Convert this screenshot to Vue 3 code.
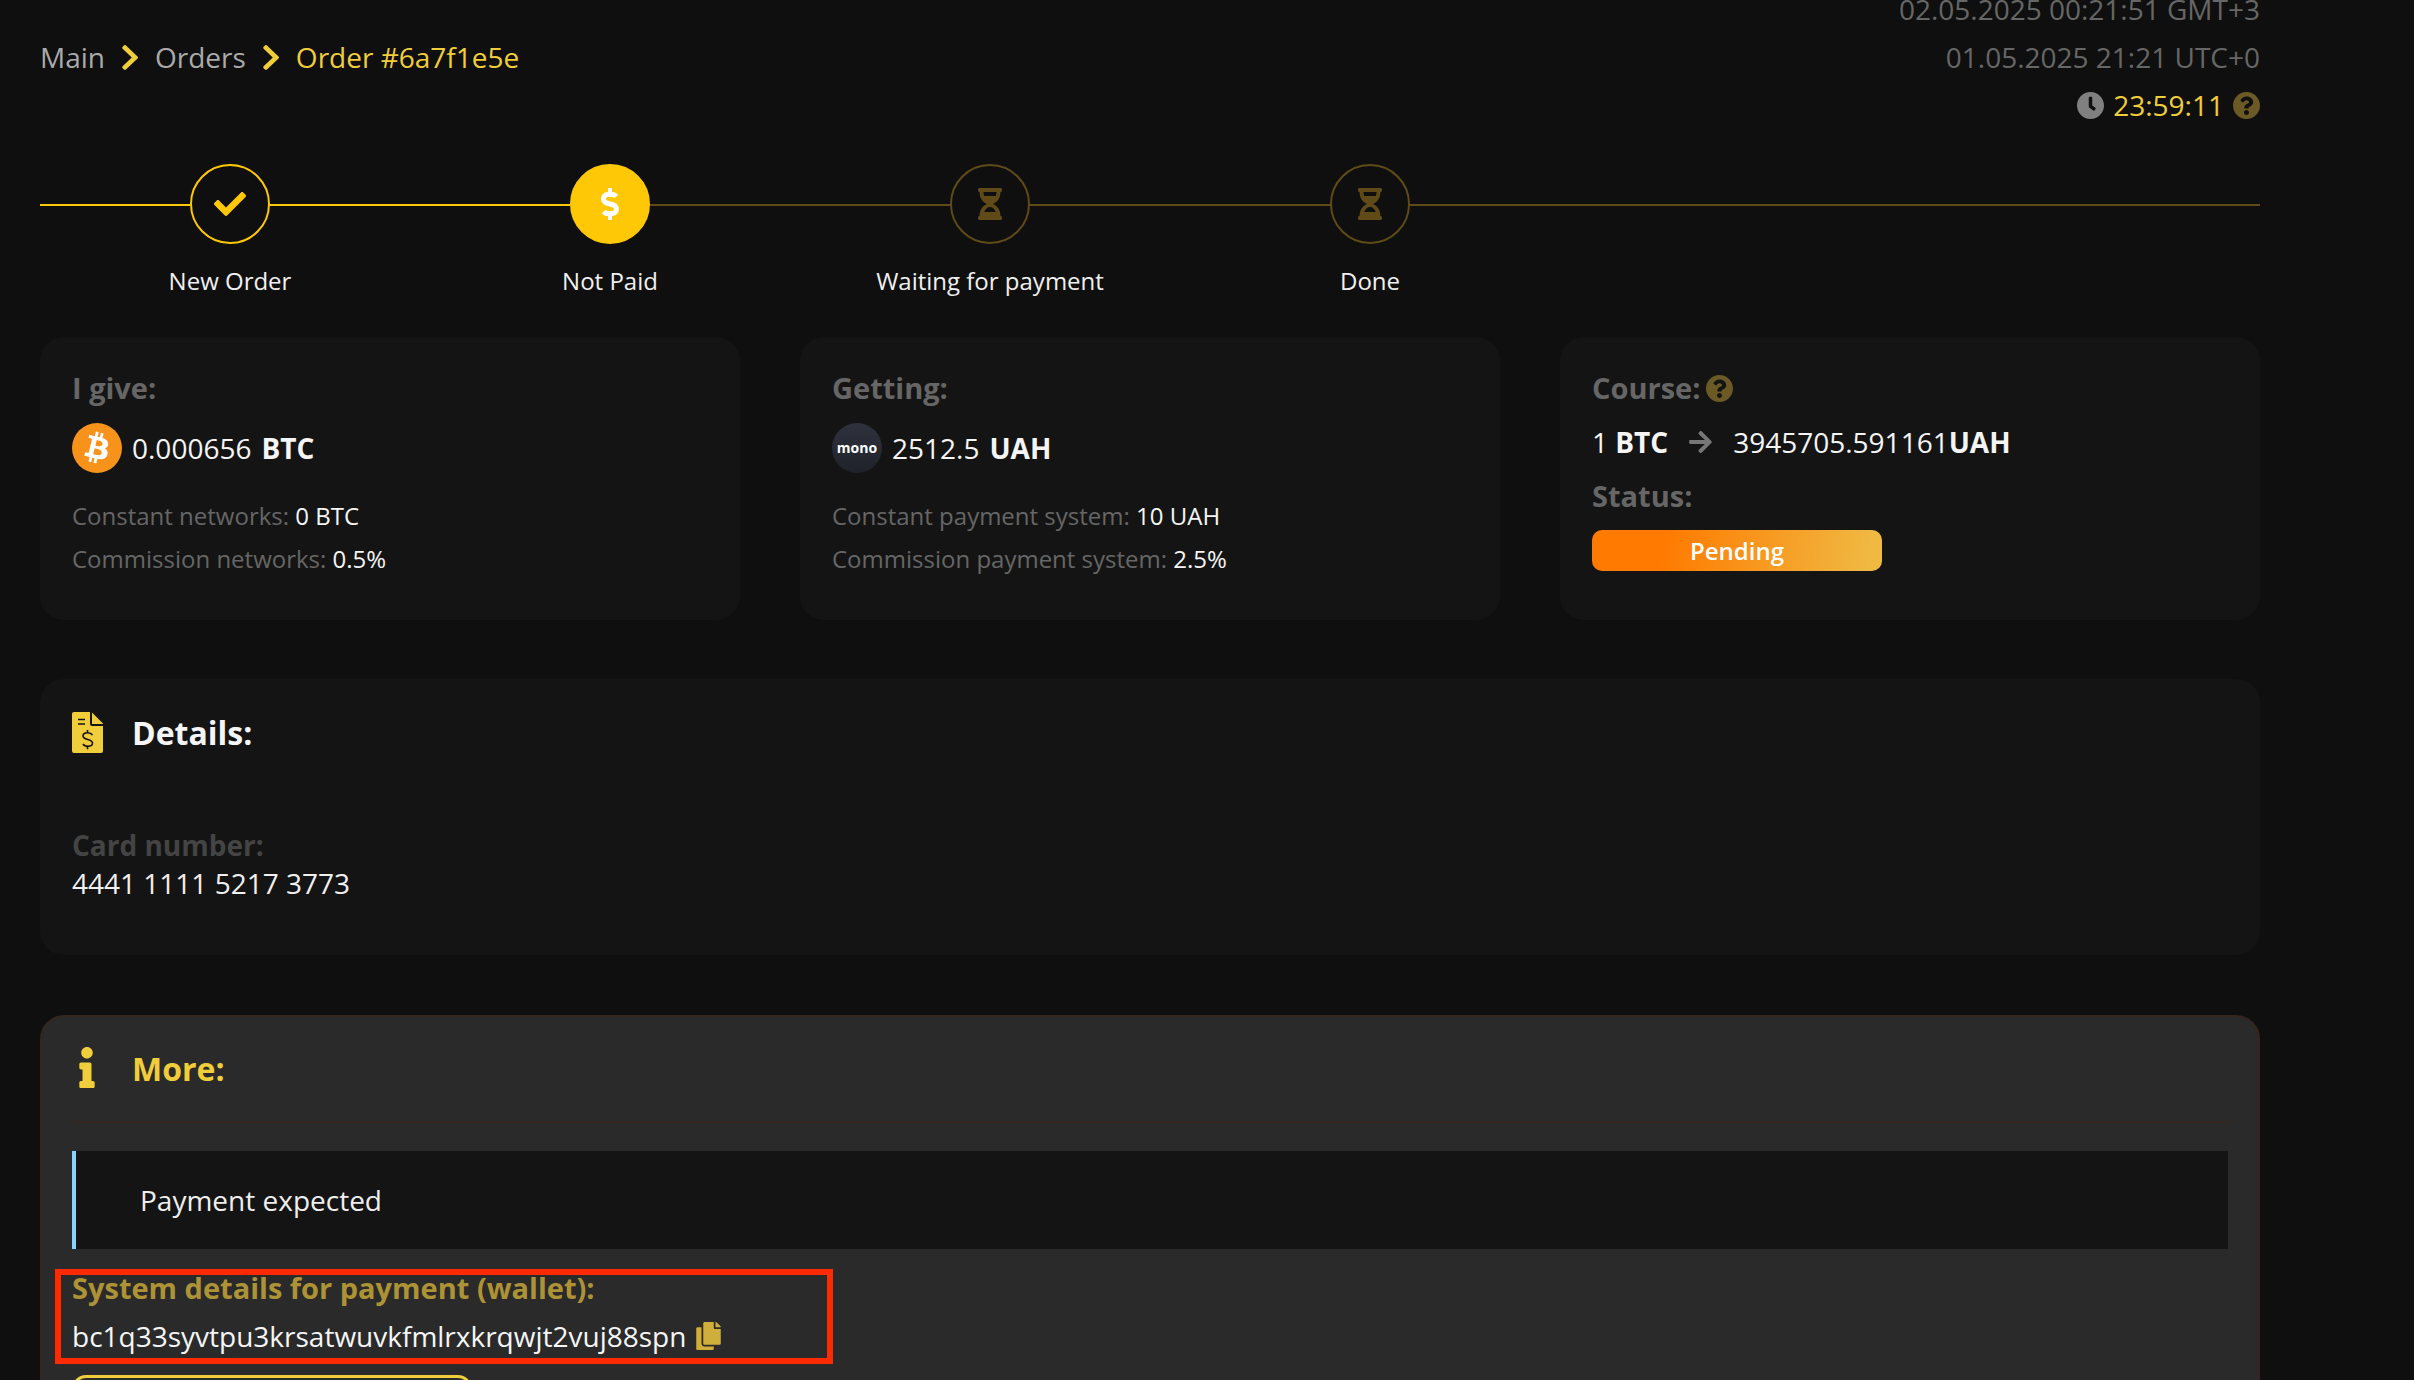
<script setup>
const icons = {
  check: { box: '0 0 512 512', d: 'M173.898 439.404l-166.4-166.4c-9.997-9.997-9.997-26.206 0-36.204l36.203-36.204c9.997-9.998 26.207-9.998 36.204 0L192 312.69 432.095 72.596c9.997-9.997 26.207-9.997 36.204 0l36.203 36.204c9.997 9.997 9.997 26.206 0 36.204l-294.4 294.401c-9.998 9.997-26.207 9.997-36.204-.001z' },
  dollar: { box: '0 0 288 512', d: 'M209.2 233.4l-108-31.6C88.7 198.2 80 186.5 80 173.5c0-16.3 13.2-29.5 29.5-29.5h66.3c12.2 0 24.2 3.7 34.2 10.5 6.1 4.1 14.3 3.1 19.5-2l34.8-34c7.1-6.9 6.1-18.4-1.8-24.5C238 74.8 207.4 64.1 176 64V16c0-8.8-7.2-16-16-16h-32c-8.8 0-16 7.2-16 16v48h-2.5C45.8 64-5.4 118.7.5 183.6c4.2 46.1 39.4 83.6 83.8 96.6l102.5 30c12.5 3.7 21.2 15.3 21.2 28.3 0 16.3-13.2 29.5-29.5 29.5h-66.3C100 368 88 364.3 78 357.5c-6.1-4.1-14.3-3.1-19.5 2l-34.8 34c-7.1 6.9-6.1 18.4 1.8 24.5 24.5 19.2 55.1 29.9 86.5 30v48c0 8.8 7.2 16 16 16h32c8.8 0 16-7.2 16-16v-48.2c46.6-.9 90.3-28.6 105.7-72.7 21.5-61.6-14.6-124.8-72.5-141.7z' },
  hourglass: { box: '0 0 384 512', d: 'M360 0H24C10.745 0 0 10.745 0 24v16c0 13.255 10.745 24 24 24 0 90.965 51.016 167.734 120.842 192C75.016 280.266 24 357.035 24 448c-13.255 0-24 10.745-24 24v16c0 13.255 10.745 24 24 24h336c13.255 0 24-10.745 24-24v-16c0-13.255-10.745-24-24-24 0-90.965-51.016-167.734-120.842-192C308.984 231.734 360 154.965 360 64c13.255 0 24-10.745 24-24V24c0-13.255-10.745-24-24-24zm-75.078 384H99.08c17.059-46.797 52.096-80 92.92-80 40.821 0 75.862 33.196 92.922 80zm.019-256H99.078C91.988 108.548 88 86.748 88 64h208c0 22.805-3.987 44.587-11.059 64z' },
}

const steps = [
  { label: 'New Order', icon: 'check', state: 'done' },
  { label: 'Not Paid', icon: 'dollar', state: 'active' },
  { label: 'Waiting for payment', icon: 'hourglass', state: 'todo' },
  { label: 'Done', icon: 'hourglass', state: 'todo' },
]

const helpPath = 'M504 256c0 136.997-111.043 248-248 248S8 392.997 8 256C8 119.083 119.043 8 256 8s248 111.083 248 248zM262.655 90c-54.497 0-89.255 22.957-116.549 63.758-3.536 5.286-2.353 12.415 2.715 16.258l34.699 26.31c5.205 3.947 12.621 3.008 16.665-2.122 17.864-22.658 30.113-35.797 57.303-35.797 20.429 0 45.698 13.148 45.698 32.958 0 14.976-12.363 22.667-32.534 33.976C247.128 238.528 216 254.941 216 296v4c0 6.627 5.373 12 12 12h56c6.627 0 12-5.373 12-12v-1.333c0-28.462 83.186-29.647 83.186-106.667 0-58.002-60.165-102-116.531-102zM256 338c-25.365 0-46 20.635-46 46 0 25.364 20.635 46 46 46s46-20.636 46-46c0-25.365-20.635-46-46-46z'
const chevronPath = 'M285.476 272.971L91.132 467.314c-9.373 9.373-24.569 9.373-33.941 0l-22.667-22.667c-9.357-9.357-9.375-24.522-.04-33.901L188.505 256 34.484 101.255c-9.335-9.379-9.317-24.544.04-33.901l22.667-22.667c9.373-9.373 24.569-9.373 33.941 0L285.475 239.03c9.373 9.372 9.373 24.568.001 33.941z'
</script>

<template>
  <div class="page">
    <header class="top">
      <nav class="crumbs">
        <span>Main</span>
        <svg class="chevron" viewBox="24 37 269 438" preserveAspectRatio="none"><path :d="chevronPath" /></svg>
        <span>Orders</span>
        <svg class="chevron" viewBox="24 37 269 438" preserveAspectRatio="none"><path :d="chevronPath" /></svg>
        <span class="current">Order #6a7f1e5e</span>
      </nav>
      <div class="times">
        <div>02.05.2025 00:21:51 GMT+3</div>
        <div>01.05.2025 21:21 UTC+0</div>
        <div class="timer">
          <svg class="clock" viewBox="8 8 496 496"><path d="M256,8C119,8,8,119,8,256S119,504,256,504,504,393,504,256,393,8,256,8Zm92.49,313h0l-20,25a16,16,0,0,1-22.49,2.5h0l-67-49.72a40,40,0,0,1-15-31.23V112a16,16,0,0,1,16-16h32a16,16,0,0,1,16,16V256l58,42.5A16,16,0,0,1,348.49,321Z" /></svg>
          <span class="countdown">23:59:11</span>
          <svg class="help" viewBox="8 8 496 496"><path :d="helpPath" /></svg>
        </div>
      </div>
    </header>

    <section class="steps">
      <div class="track"></div>
      <div v-for="step in steps" :key="step.label" class="step" :class="step.state">
        <div class="circle">
          <svg :class="'ico-' + step.icon" :viewBox="icons[step.icon].box"><path :d="icons[step.icon].d" /></svg>
        </div>
        <div class="step-label">{{ step.label }}</div>
      </div>
    </section>

    <section class="cards">
      <div class="card">
        <div class="card-title">I give:</div>
        <div class="amount">
          <svg class="coin" viewBox="0 0 64 64">
            <circle cx="32" cy="32" r="32" fill="#f7931a" />
            <path fill="#fff" d="M46.1 27.4c.6-4.3-2.6-6.6-7.1-8.1l1.5-5.8-3.5-.9-1.4 5.7c-.9-.2-1.9-.5-2.8-.7l1.4-5.7-3.6-.9-1.4 5.8c-.8-.2-1.5-.3-2.2-.5l-4.9-1.2-.9 3.8s2.6.6 2.6.6c1.4.4 1.7 1.3 1.6 2l-1.6 6.6c.1 0 .2.1.4.1l-.4-.1-2.3 9.2c-.2.4-.6 1.1-1.6.8 0 .1-2.6-.6-2.6-.6l-1.8 4.1 4.6 1.2c.9.2 1.7.4 2.5.6l-1.5 5.9 3.5.9 1.5-5.8c1 .3 1.9.5 2.8.7l-1.4 5.8 3.6.9 1.5-5.9c6 1.1 10.6.7 12.5-4.8 1.5-4.4-.1-7-3.3-8.6 2.3-.5 4.1-2.1 4.6-5.3zm-8.1 11.3c-1.1 4.4-8.5 2-10.9 1.4l1.9-7.8c2.4.6 10.1 1.8 9 6.4zm1.1-11.4c-1 4-7.2 2-9.2 1.5l1.8-7.1c2 .5 8.5 1.4 7.4 5.6z" />
          </svg>
          <span>0.000656</span>
          <b>BTC</b>
        </div>
        <div class="meta">Constant networks: <span>0 BTC</span></div>
        <div class="meta">Commission networks: <span>0.5%</span></div>
      </div>

      <div class="card">
        <div class="card-title">Getting:</div>
        <div class="amount">
          <div class="mono">mono</div>
          <span>2512.5</span>
          <b>UAH</b>
        </div>
        <div class="meta">Constant payment system: <span>10 UAH</span></div>
        <div class="meta">Commission payment system: <span>2.5%</span></div>
      </div>

      <div class="card">
        <div class="card-title course">
          Course:
          <svg class="help" viewBox="8 8 496 496"><path :d="helpPath" /></svg>
        </div>
        <div class="rate">
          <span>1 <b>BTC</b></span>
          <svg class="arrow" viewBox="0 0 448 512"><path d="M190.5 66.9l22.2-22.2c9.4-9.4 24.6-9.4 33.9 0L441 239c9.4 9.4 9.4 24.6 0 33.9L246.6 467.3c-9.4 9.4-24.6 9.4-33.9 0l-22.2-22.2c-9.5-9.5-9.3-25 .4-34.3L311.4 296H24c-13.3 0-24-10.7-24-24v-32c0-13.3 10.7-24 24-24h287.4L190.9 101.2c-9.8-9.3-10-24.8-.4-34.3z" /></svg>
          <span>3945705.591161<b>UAH</b></span>
        </div>
        <div class="card-title status">Status:</div>
        <div class="pending">Pending</div>
      </div>
    </section>

    <section class="panel details">
      <div class="panel-head">
        <svg class="doc" viewBox="0 0 31 41">
          <path fill="#f0cd3b" d="M2 0h16v12a2 2 0 0 0 2 2h11v25a2 2 0 0 1-2 2H2a2 2 0 0 1-2-2V2a2 2 0 0 1 2-2z" />
          <path fill="#f0cd3b" d="M20 .5 31 11.5V12H20z" />
          <path fill="none" stroke="#141414" stroke-width="1.6" d="M6 7.500h7M6 12h7M20.500 23c-1-1.500-2.700-2.200-5-2.200-2.500 0-4.500 1.300-4.500 3.300 0 4.400 9.500 2.400 9.500 6.900 0 2-2 3.300-4.500 3.300-2.300 0-4-.7-5-2.300M15.500 18v3M15.500 34.300v3" />
        </svg>
        <h2>Details:</h2>
      </div>
      <div class="field-label">Card number:</div>
      <div class="field-value">4441 1111 5217 3773</div>
    </section>

    <section class="panel more">
      <div class="panel-head">
        <svg class="info" viewBox="0 0 192 512"><path d="M20 424.229h20V279.771H20c-11.046 0-20-8.954-20-20V212c0-11.046 8.954-20 20-20h112c11.046 0 20 8.954 20 20v212.229h20c11.046 0 20 8.954 20 20V492c0 11.046-8.954 20-20 20H20c-11.046 0-20-8.954-20-20v-47.771c0-11.046 8.954-20 20-20zM96 0C56.235 0 24 32.235 24 72s32.235 72 72 72 72-32.235 72-72S135.764 0 96 0z" /></svg>
        <h2>More:</h2>
      </div>
      <div class="notice">Payment expected</div>
      <div class="wallet">
        <div class="highlight"></div>
        <div class="wallet-label">System details for payment (wallet):</div>
        <div class="wallet-value">
          <span>bc1q33syvtpu3krsatwuvkfmlrxkrqwjt2vuj88spn</span>
          <svg class="copy" viewBox="0 0 448 512"><path d="M320 448v40c0 13.255-10.745 24-24 24H24c-13.255 0-24-10.745-24-24V120c0-13.255 10.745-24 24-24h72v296c0 30.879 25.121 56 56 56h168zm0-344V0H152c-13.255 0-24 10.745-24 24v368c0 13.255 10.745 24 24 24h272c13.255 0 24-10.745 24-24V128H344c-13.2 0-24-10.8-24-24zm120.971-31.029L375.029 7.029A24 24 0 0 0 358.059 0H352v96h96v-6.059a24 24 0 0 0-7.029-16.97z" /></svg>
        </div>
      </div>
      <div class="outline-btn"></div>
    </section>
  </div>
</template>

<style>
html, body {
  margin: 0;
  height: 100%;
  overflow: hidden;
  background: #0f0f0f;
}
</style>

<style scoped>
.page {
  box-sizing: border-box;
  width: 2300px;
  height: 1380px;
  padding: 0 40px;
  overflow: hidden;
  font-family: "Open Sans", "Noto Sans", sans-serif;
  font-size: 28px;
  color: #fff;
  background: #0f0f0f;
}

.top {
  display: flex;
  justify-content: space-between;
  align-items: flex-start;
  height: 130px;
  line-height: 48px;
}

.crumbs {
  display: flex;
  align-items: center;
  gap: 17px;
  margin-top: 33px;
  color: #aaa;
}
.crumbs .current { color: #f0cd3b; }
.chevron { width: 16px; height: 25px; fill: #f0cd3b; }

.times {
  margin-top: -15px;
  text-align: right;
  color: #666;
}
.timer {
  display: flex;
  justify-content: flex-end;
  align-items: center;
  gap: 9px;
}
.countdown { color: #f0cd3b; }
.clock { width: 27px; height: 27px; fill: #808080; }
.help { width: 27px; height: 27px; fill: #6b5a26; }

.steps {
  position: relative;
  display: flex;
  margin-top: 34px;
}
.track {
  position: absolute;
  top: 40px;
  left: 0;
  right: 0;
  height: 2px;
  background: linear-gradient(to right, #ffc807 530px, #5f4a18 530px);
}
.step {
  position: relative;
  width: 380px;
  display: flex;
  flex-direction: column;
  align-items: center;
}
.circle {
  box-sizing: border-box;
  width: 80px;
  height: 80px;
  border-radius: 50%;
  border: 2px solid #5f4a18;
  background: #0f0f0f;
  display: flex;
  align-items: center;
  justify-content: center;
  fill: #5f4a18;
}
.step.done .circle { border-color: #ffc807; fill: #ffc807; }
.step.active .circle { border-color: #ffc807; background: #ffc807; fill: #fff; }
.ico-check { width: 32px; height: 32px; }
.ico-dollar { width: 20px; height: 32px; }
.ico-hourglass { width: 24px; height: 32px; }
.step-label {
  margin-top: 20px;
  font-size: 24px;
  line-height: 34px;
  color: #f0f0f0;
}

.cards {
  display: grid;
  grid-template-columns: repeat(3, 1fr);
  gap: 60px;
  margin-top: 39px;
}
.card {
  box-sizing: border-box;
  height: 283px;
  padding: 32px;
  background: #141414;
  border-radius: 24px;
}
.card-title {
  font-size: 29px;
  font-weight: 700;
  line-height: 38px;
  color: #666;
}
.card-title.course {
  display: flex;
  align-items: center;
  gap: 6px;
}
.card-title.status { margin-top: 15px; }

.amount {
  display: flex;
  align-items: center;
  height: 50px;
  margin: 16px 0 21px;
  line-height: 50px;
  color: #f5f5f5;
}
.amount b { margin-left: 10px; font-weight: 700; }
.coin { width: 50px; height: 50px; margin-right: 10px; }
.mono {
  width: 50px;
  height: 50px;
  margin-right: 10px;
  border-radius: 50%;
  background: linear-gradient(#2f323d, #1f222a);
  font-size: 14px;
  font-weight: 700;
  line-height: 50px;
  text-align: center;
  color: #fff;
}
.meta {
  font-size: 24px;
  line-height: 43px;
  color: #666;
}
.meta span { color: #f5f5f5; }

.rate {
  display: flex;
  align-items: center;
  gap: 20px;
  margin-top: 15px;
  line-height: 40px;
  color: #f5f5f5;
}
.rate b { font-weight: 700; }
.arrow { width: 25px; height: 26px; fill: #777; }
.pending {
  width: 290px;
  height: 41px;
  margin-top: 15px;
  border-radius: 10px;
  background: linear-gradient(100deg, #ff7a00 25%, #f0b942 95%);
  font-size: 24px;
  font-weight: 600;
  line-height: 41px;
  text-align: center;
}

.panel {
  box-sizing: border-box;
  margin-top: 60px;
  padding: 32px;
  background: #141414;
  border-radius: 24px;
}
.details { height: 276px; margin-top: 59px; padding-top: 33px; }
.panel-head {
  display: flex;
  align-items: center;
  height: 41px;
}
.panel-head h2 {
  margin: 0;
  font-size: 32px;
  font-weight: 700;
  color: #f5f5f5;
}
.doc { width: 31px; height: 41px; margin-right: 29px; }
.field-label {
  margin-top: 73px;
  font-weight: 700;
  line-height: 38px;
  color: #444;
}
.field-value { line-height: 38px; color: #f0f0f0; }

.more {
  height: 600px;
  padding: 30px 30px 0;
  background: #2a2a2a;
  border: 2px solid #35261e;
}
.more .panel-head {
  height: 74px;
  align-items: flex-start;
  border-bottom: 2px solid #35261e;
}
.more .panel-head h2 { color: #f0cd3b; line-height: 44px; }
.info { width: 16px; height: 41px; margin: 0 37px 0 7px; fill: #f0cd3b; }
.notice {
  box-sizing: border-box;
  height: 98px;
  margin-top: 28px;
  padding-left: 64px;
  border-left: 4px solid #8bd0ff;
  background: #141414;
  line-height: 98px;
  color: #eee;
}

.wallet { position: relative; margin-top: 20px; }
.highlight {
  position: absolute;
  top: 0;
  left: -17px;
  box-sizing: border-box;
  width: 778px;
  height: 95px;
  border: 6px solid #ff2a00;
}
.wallet-label {
  font-size: 29px;
  font-weight: 700;
  line-height: 38px;
  color: #ad9335;
}
.wallet-value {
  display: flex;
  align-items: center;
  gap: 10px;
  margin-top: 10px;
  line-height: 38px;
  color: #f5f5f5;
}
.copy { width: 25px; height: 28px; fill: #cfae3b; }
.outline-btn {
  box-sizing: border-box;
  width: 400px;
  height: 70px;
  margin-top: 20px;
  border: 3px solid #f0cd3b;
  border-radius: 14px;
}
</style>
